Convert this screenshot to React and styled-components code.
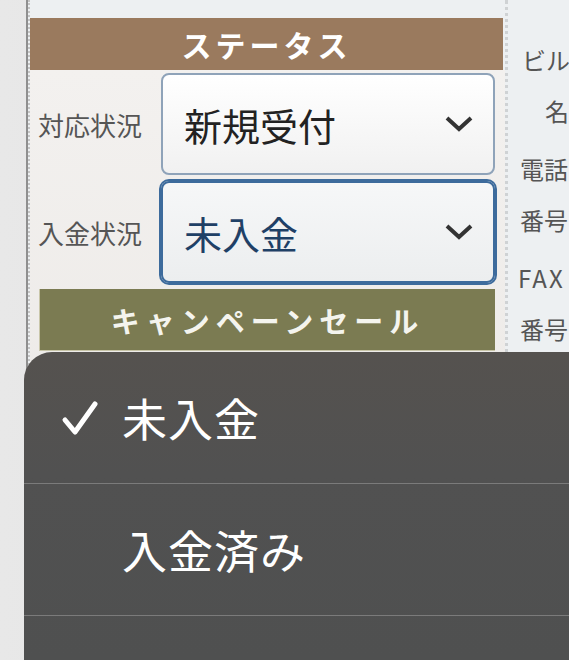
import React from 'react';
import styled, { createGlobalStyle } from 'styled-components';

const GlobalStyle = createGlobalStyle`
  html, body {
    margin: 0;
    padding: 0;
    width: 569px;
    height: 660px;
    overflow: hidden;
    background: #e4e4e4;
    font-family: "Noto Sans CJK JP", "Noto Sans", sans-serif;
  }
`;

const rows = [
  { label: '対応状況', value: '新規受付', focused: false },
  { label: '入金状況', value: '未入金', focused: true },
];

// right-hand column is cut off by the screen edge
const contactCells = [
  [{ text: 'ビル', indent: 14 }, { text: '名', indent: 37 }],
  [{ text: '電話', indent: 12 }, { text: '番号', indent: 12 }],
  [{ text: 'FAX', indent: 10, spacing: 2 }, { text: '番号', indent: 12 }],
];

const options = [
  { id: 1, text: '未入金', checked: true },
  { id: 2, text: '入金済み', checked: false },
  { id: 3, text: '', checked: false },
];

const App = () => (
  <>
    <GlobalStyle />
    <Screen>
      <Panel>
        <StatusColumn>
          <SectionHeader>ステータス</SectionHeader>
          <FormBody>
            {rows.map((row) => (
              <FormRow key={row.label}>
                <FieldLabel>{row.label}</FieldLabel>
                <SelectBox $focused={row.focused}>
                  <SelectValue $focused={row.focused}>{row.value}</SelectValue>
                  <Chevron viewBox="0 0 28 16">
                    <polyline points="2,2 14,13 26,2" />
                  </Chevron>
                </SelectBox>
              </FormRow>
            ))}
            <CampaignBar>キャンペーンセール</CampaignBar>
          </FormBody>
        </StatusColumn>
        <ContactColumn>
          {contactCells.map((lines, i) => (
            <ContactCell key={i}>
              {lines.map((line) => (
                <ContactLine
                  key={line.text}
                  $indent={line.indent}
                  $spacing={line.spacing || 0}
                >
                  {line.text}
                </ContactLine>
              ))}
            </ContactCell>
          ))}
        </ContactColumn>
      </Panel>

      {/* picker sheet over the form */}
      <PickerSheet>
        {options.map((opt) => (
          <PickerItem key={opt.id}>
            <CheckSlot>
              {opt.checked && (
                <CheckMark viewBox="0 0 38 36">
                  <polyline points="4,20 14,32 34,4" />
                </CheckMark>
              )}
            </CheckSlot>
            <PickerText>{opt.text}</PickerText>
          </PickerItem>
        ))}
      </PickerSheet>
    </Screen>
  </>
);

const Screen = styled.div`
  position: relative;
  width: 569px;
  height: 660px;
  overflow: hidden;
  padding-left: 26px;
  box-sizing: border-box;
  background: linear-gradient(90deg, #e8e8e8, #dedede);
`;

const Panel = styled.div`
  display: flex;
  height: 100%;
  border-left: 2px solid #8f8f8f;
  background: #edf0f2;
`;

const StatusColumn = styled.div`
  width: 480px;
  flex-shrink: 0;
  padding-top: 18px;
  border-left: 2px dotted #c4c4c4;
  border-right: 3px dotted #cfd2d4;
  box-sizing: border-box;
  display: flex;
  flex-direction: column;
`;

const SectionHeader = styled.div`
  height: 52px;
  margin-right: 2px;
  background: #9a7a5e;
  color: #fff;
  font-size: 30px;
  font-weight: 700;
  letter-spacing: 4px;
  display: flex;
  align-items: center;
  justify-content: center;
`;

const FormBody = styled.div`
  flex: 1;
  padding-top: 3px;
  background: linear-gradient(180deg, #f3f1ef 0%, #e9e6e3 100%);
  display: flex;
  flex-direction: column;
  gap: 6px;
`;

const FormRow = styled.div`
  display: flex;
  align-items: center;
`;

const FieldLabel = styled.div`
  width: 131px;
  padding-left: 8px;
  box-sizing: border-box;
  font-size: 26px;
  color: #555;
`;

const SelectBox = styled.div`
  width: 334px;
  height: 102px;
  box-sizing: border-box;
  display: flex;
  align-items: center;
  justify-content: space-between;
  padding: 0 20px 0 21px;
  border-radius: 8px;
  border: 2px solid ${(p) => (p.$focused ? '#3d6b9c' : '#8fa3b9')};
  box-shadow: ${(p) => (p.$focused ? '0 0 0 2px #3d6b9c' : 'none')};
  background: ${(p) =>
    p.$focused
      ? 'linear-gradient(180deg, #f6f7f8, #eceeef)'
      : 'linear-gradient(180deg, #ffffff, #f1f1f1)'};
`;

const SelectValue = styled.span`
  font-size: 38px;
  color: ${(p) => (p.$focused ? '#1f4066' : '#222')};
`;

const Chevron = styled.svg`
  width: 28px;
  height: 16px;
  fill: none;
  stroke: #333;
  stroke-width: 4;
`;

const CampaignBar = styled.div`
  margin: 0 10px 0 9px;
  height: 62px;
  background: #7b7b52;
  border-left: 1px solid #c9c6a9;
  border-bottom: 1px solid #c9c6a9;
  box-sizing: border-box;
  color: #f4f4ee;
  font-size: 29px;
  font-weight: 700;
  letter-spacing: 6px;
  display: flex;
  align-items: center;
  justify-content: center;
`;

const ContactColumn = styled.div`
  flex: 1;
  min-width: 0;
  padding-top: 30px;
  display: flex;
  flex-direction: column;
`;

const ContactCell = styled.div`
  height: 109px;
  padding-top: 4px;
  box-sizing: border-box;
`;

const ContactLine = styled.div`
  font-size: 24px;
  line-height: 51px;
  color: #555;
  white-space: nowrap;
  padding-left: ${(p) => p.$indent}px;
  letter-spacing: ${(p) => p.$spacing}px;
`;

const PickerSheet = styled.div`
  position: absolute;
  left: 24px;
  right: 0;
  top: 352px;
  bottom: 0;
  border-top-left-radius: 28px;
  background: linear-gradient(180deg, #55524f 0%, #515151 40%, #4f5050 100%);
  display: flex;
  flex-direction: column;
`;

const PickerItem = styled.div`
  height: 131px;
  flex-shrink: 0;
  border-bottom: 1px solid #7b7b7b;
  display: flex;
  align-items: center;
`;

const CheckSlot = styled.div`
  width: 98px;
  padding-left: 37px;
  box-sizing: border-box;
  display: flex;
  align-items: center;
`;

const CheckMark = styled.svg`
  width: 38px;
  height: 36px;
  fill: none;
  stroke: #fff;
  stroke-width: 5;
  stroke-linecap: round;
  stroke-linejoin: round;
`;

const PickerText = styled.span`
  font-size: 45px;
  color: #fff;
  letter-spacing: 1px;
`;

export default App;
